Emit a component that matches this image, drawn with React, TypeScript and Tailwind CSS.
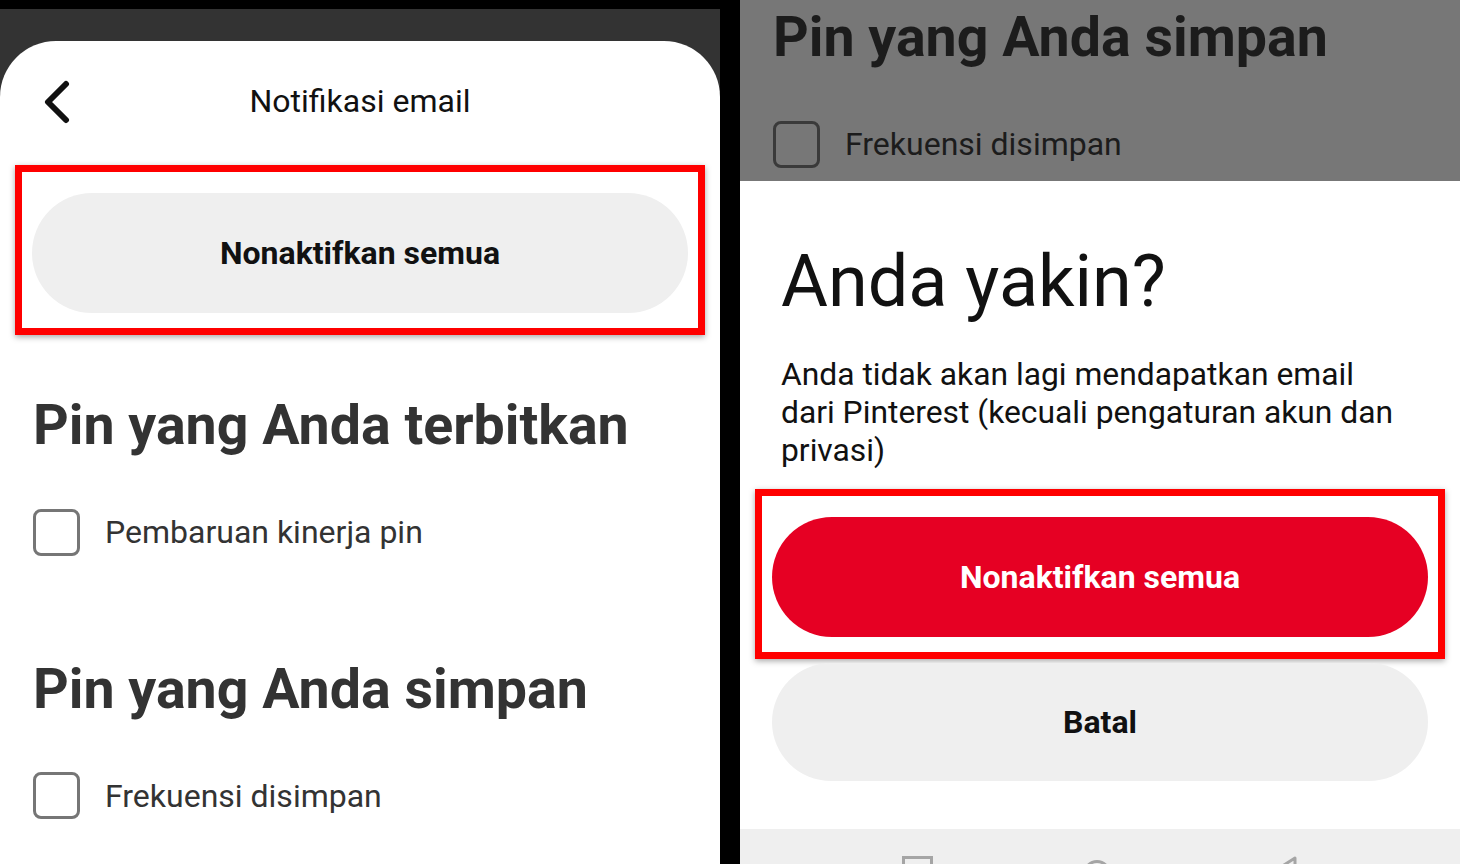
const font = "font-['Roboto','Liberation_Sans',sans-serif]";

function Checkbox({ dim }: { dim?: boolean }) {
  return (
    <div
      className={`w-[47px] h-[47px] rounded-[8px] border-[3px] shrink-0 ${
        dim ? 'border-[#3a3a3a]' : 'border-[#767676]'
      }`}
    />
  );
}

function CheckRow({ label, dim }: { label: string; dim?: boolean }) {
  return (
    <div className="flex items-center gap-[25px]">
      <Checkbox dim={dim} />
      <span className={`text-[32px] leading-none ${dim ? 'text-[#1c1c1c]' : 'text-[#333]'}`}>{label}</span>
    </div>
  );
}

// red highlight frame drawn around the primary action
function Highlight({ children }: { children: React.ReactNode }) {
  return (
    <div className="mx-[15px] border-[7px] border-[#ff0000] px-[10px] pt-[21px] pb-[15px] shadow-[0_2px_6px_rgba(0,0,0,0.35)]">
      {children}
    </div>
  );
}

function BackArrow() {
  return (
    <svg width="40" height="44" viewBox="0 0 40 44">
      <path d="M26 4 L8 22 L26 40" fill="none" stroke="#111" strokeWidth="6" strokeLinecap="round" strokeLinejoin="round" />
    </svg>
  );
}

function SettingsPanel() {
  return (
    <div className="w-[720px] h-full flex flex-col bg-[#333]">
      <div className="h-[9px] bg-black" />
      <div className="flex-1 pt-[32px]">
        <div className="h-full bg-white rounded-t-[56px]">
          <div className="h-[120px] grid grid-cols-[1fr_auto_1fr] items-center">
            <div className="pl-[40px] pt-[1px]">
              <BackArrow />
            </div>
            <span className="text-[32px] text-[#111]">Notifikasi email</span>
            <div />
          </div>

          <div className="mt-[4px]">
            <Highlight>
              <div className="h-[120px] rounded-full bg-[#efefef] flex items-center justify-center">
                <span className="text-[32px] font-bold text-[#111]">Nonaktifkan semua</span>
              </div>
            </Highlight>
          </div>

          <div className="px-[33px]">
            <h2 className="mt-[63px] text-[55.5px] leading-none font-bold text-[#333]">Pin yang Anda terbitkan</h2>
            <div className="mt-[55px]">
              <CheckRow label="Pembaruan kinerja pin" />
            </div>
            <h2 className="mt-[106px] text-[55.5px] leading-none font-bold text-[#333]">Pin yang Anda simpan</h2>
            <div className="mt-[55px]">
              <CheckRow label="Frekuensi disimpan" />
            </div>
          </div>
        </div>
      </div>
    </div>
  );
}

function NavBar() {
  return (
    <div className="h-[35px] bg-[#efefef] overflow-hidden flex items-start justify-center gap-[150px] pt-[27px]">
      <div className="w-[31px] h-[31px] border-[3px] border-[#a5a5a5]" />
      <div className="w-[28px] h-[28px] rounded-full border-[3px] border-[#a5a5a5] mt-[4px]" />
      <svg width="30" height="34" viewBox="0 0 30 34" className="-mt-[1px] ml-[8px]">
        <path d="M26 3 L4 17 L26 31 Z" fill="none" stroke="#a5a5a5" strokeWidth="3" strokeLinejoin="round" />
      </svg>
    </div>
  );
}

function ConfirmPanel() {
  return (
    <div className="w-[720px] h-full flex flex-col bg-white">
      {/* dimmed page behind the sheet */}
      <div className="h-[181px] bg-[#777] px-[33px] pt-[10px] overflow-hidden">
        <h2 className="text-[55.5px] leading-none font-bold text-[#1c1c1c]">Pin yang Anda simpan</h2>
        <div className="mt-[55px]">
          <CheckRow label="Frekuensi disimpan" dim />
        </div>
      </div>

      <div className="flex-1">
        <div className="px-[41px]">
          <h1 className="mt-[65px] text-[72px] leading-none text-[#111]">Anda yakin?</h1>
          <p className="mt-[37px] w-[640px] text-[31.8px] leading-[38px] text-[#111]">
            Anda tidak akan lagi mendapatkan email
            <br />
            dari Pinterest (kecuali pengaturan akun dan privasi)
          </p>
        </div>

        <div className="mt-[20px]">
          <Highlight>
            <div className="h-[120px] rounded-full bg-[#e60023] flex items-center justify-center">
              <span className="text-[32px] font-bold text-white">Nonaktifkan semua</span>
            </div>
          </Highlight>
        </div>

        <div className="mx-[32px] mt-[4px] h-[118px] rounded-full bg-[#efefef] flex items-center justify-center">
          <span className="text-[32px] font-bold text-[#111]">Batal</span>
        </div>
      </div>

      <NavBar />
    </div>
  );
}

export default function App() {
  return (
    <div className={`w-[1460px] h-[864px] bg-black flex gap-[20px] overflow-hidden ${font}`}>
      <SettingsPanel />
      <ConfirmPanel />
    </div>
  );
}
